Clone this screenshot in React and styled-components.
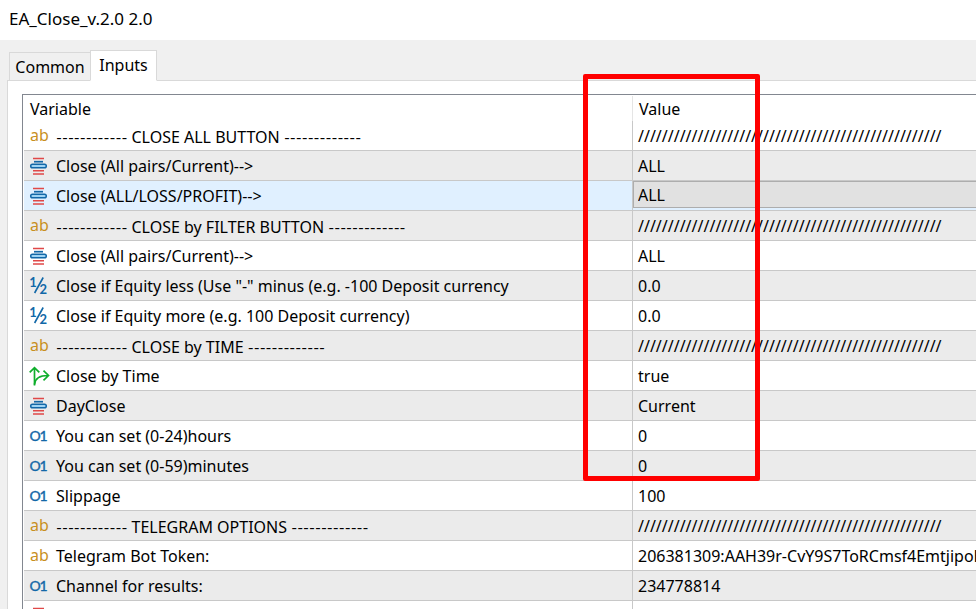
import { useState } from 'react';
import styled, { createGlobalStyle } from 'styled-components';

const GlobalStyle = createGlobalStyle`
    * {
        box-sizing: border-box;
    }

    body {
        margin: 0;
        overflow: hidden;
        background: #f0f0f0;
        color: #000;
        font-family: "Noto Sans", "Open Sans", sans-serif;
        font-size: 16px;
    }
`

const Window = styled.div`
    position: relative;
    display: flex;
    flex-direction: column;
    height: 100vh;
    overflow: hidden;
`

const TitleBar = styled.header`
    flex: none;
    height: 40px;
    padding: 0 9px;
    background: #fff;
`

const Title = styled.h1`
    margin: 0;
    font-size: 17px;
    font-weight: 400;
    line-height: 38px;
`

const TabBar = styled.div`
    display: flex;
    flex: none;
    align-items: flex-end;
    height: 41px;
    margin-bottom: -1px;
    padding-left: 9px;
    z-index: 1;
`

const Tab = styled.button`
    width: ${({ $active }) => $active ? 67 : 82}px;
    height: ${({ $active }) => $active ? 31 : 29}px;
    margin-right: -1px;
    padding: 0 0 ${({ $active }) => $active ? 2 : 0}px;
    border: 1px solid #d9d9d9;
    border-bottom-color: ${({ $active }) => $active ? '#fff' : '#d9d9d9'};
    background: ${({ $active }) => $active ? '#fff' : '#f0f0f0'};
    color: inherit;
    font: inherit;
    line-height: 26px;
`

const Panel = styled.main`
    flex: 1;
    min-height: 0;
    margin-left: 7px;
    padding: 13px 0 0 14px;
    border: solid #d9d9d9;
    border-width: 1px 0 0 1px;
    background: #fff;
`

const List = styled.div`
    height: 100%;
    padding: 1px 0 0 1px;
    border: solid #828790;
    border-width: 1px 0 0 1px;
    overflow: hidden;
`

const Table = styled.table`
    width: 100%;
    table-layout: fixed;
    border-collapse: separate;
    border-spacing: 0;
`

const NameCol = styled.col`
    width: 609px;
`

const HeadCell = styled.th`
    height: 25px;
    padding: 0 6px;
    border-right: 1px solid ${({ $last }) => $last ? 'transparent' : '#e5e5e5'};
    font-weight: 400;
    line-height: 24px;
    text-align: left;
`

const Row = styled.tr`
    background: ${({ $selected }) => $selected ? '#e0f0ff' : '#fff'};

    &:nth-child(even) {
        background: #ebebeb;
    }
`

const Cell = styled.td`
    height: 30px;
    padding: 2px 0 0 5px;
    border-bottom: 1px solid #c8c8c8;
    line-height: 27px;
    white-space: nowrap;
    overflow: hidden;
`

const NameCell = styled(Cell)`
    padding-left: 6px;
    border-right: 1px solid #c8c8c8;
`

const EditCell = styled(Cell)`
    padding: 0;
    vertical-align: top;
`

const Name = styled.div`
    display: flex;
    align-items: center;
    height: 27px;
    gap: 6px;
`

const Dashes = styled.span`
    font-family: Lato, sans-serif;
`

const Select = styled.select`
    display: block;
    width: 100%;
    height: 27px;
    padding: 0 4px 2px;
    border: 1px solid #adadad;
    border-right: 0;
    border-radius: 0;
    background: #e1e1e1;
    appearance: none;
    color: inherit;
    font: inherit;
`

const Glyph = styled.svg`
    flex: none;
    width: 20px;
    height: 20px;
    overflow: visible;
`

const Highlight = styled.div`
    position: absolute;
    top: 74px;
    left: 583px;
    width: 177px;
    height: 407px;
    border: 5px solid #f00;
    border-radius: 2px;
    pointer-events: none;
    z-index: 2;
`

const StringIcon = () => (
    <Glyph viewBox="0 0 20 20" aria-hidden="true">
        <text x="0" y="14" fill="#c8901e" fontSize="16">ab</text>
    </Glyph>
)

const IntegerIcon = () => (
    <Glyph viewBox="0 0 20 20" fill="#1268a8" fontFamily="Lato" fontSize="14" stroke="#1268a8" strokeWidth=".4" aria-hidden="true">
        <text x="-.5" y="14">O</text>
        <text x="9.5" y="14">1</text>
    </Glyph>
)

const DoubleIcon = () => (
    <Glyph viewBox="0 0 20 20" fill="#1268a8" fontFamily="Lato" fontSize="13" fontWeight="700" aria-hidden="true">
        <text x="-.8" y="9.5">1</text>
        <path d="M13.2.5 4.6 16" stroke="#1268a8" strokeWidth="1.6" />
        <text x="9.6" y="16.5">2</text>
    </Glyph>
)

const BoolIcon = () => (
    <Glyph viewBox="0 0 20 20" fill="none" stroke="#0fae2c" strokeWidth="1.7" aria-hidden="true">
        <path d="M4.5 18.5V.8M-.3 5.4 4.5.6 9.3 5.4" />
        <path d="M4.5 17.5C5 11.5 9 8.5 18 8.5M13.5 3.7l5 4.8-5 4.8" />
    </Glyph>
)

const EnumIcon = () => (
    <Glyph viewBox="0 0 20 20" aria-hidden="true">
        <path d="M3 1.5h11M3 13.7h11M3 17h11" stroke="#e04848" strokeWidth="1.6" />
        <path d="M4 4.7h9" stroke="#1268a8" strokeWidth="1.7" />
        <rect x=".7" y="7.2" width="15.6" height="3.6" rx="1.8" fill="#9fd4f4" stroke="#1268a8" strokeWidth="1.5" />
    </Glyph>
)

const icons = {
    string: StringIcon,
    int: IntegerIcon,
    double: DoubleIcon,
    bool: BoolIcon,
    enum: EnumIcon
}

const slashes = '/'.repeat(51)

const inputs = [
    { type: 'string', section: 'CLOSE ALL BUTTON', value: slashes },
    { type: 'enum', name: 'Close (All pairs/Current)-->', value: 'ALL' },
    { type: 'enum', name: 'Close (ALL/LOSS/PROFIT)-->', value: 'ALL', options: ['ALL', 'LOSS', 'PROFIT'] },
    { type: 'string', section: 'CLOSE by FILTER BUTTON', value: slashes },
    { type: 'enum', name: 'Close (All pairs/Current)-->', value: 'ALL' },
    { type: 'double', name: 'Close if Equity less (Use "-" minus (e.g. -100 Deposit currency', value: '0.0' },
    { type: 'double', name: 'Close if Equity more (e.g. 100 Deposit currency)', value: '0.0' },
    { type: 'string', section: 'CLOSE by TIME', value: slashes },
    { type: 'bool', name: 'Close by Time', value: 'true' },
    { type: 'enum', name: 'DayClose', value: 'Current' },
    { type: 'int', name: 'You can set (0-24)hours', value: '0' },
    { type: 'int', name: 'You can set (0-59)minutes', value: '0' },
    { type: 'int', name: 'Slippage', value: '100' },
    { type: 'string', section: 'TELEGRAM OPTIONS', value: slashes },
    { type: 'string', name: 'Telegram Bot Token:', value: '206381309:AAH39r-CvY9S7ToRCmsf4EmtjipoH' },
    { type: 'int', name: 'Channel for results:', value: '234778814' },
    { type: 'enum', name: '', value: '' }
]

const Section = ({ children }) => (
    <span>
        <Dashes>{ '-'.repeat(12) }</Dashes> { children } <Dashes>{ '-'.repeat(13) }</Dashes>
    </span>
)

const InputRow = ({ type, name, section, value, options }) => {
    const [selected, setSelected] = useState(value)
    const Icon = icons[type]

    return (
        <Row $selected={ !!options }>
            <NameCell>
                <Name>
                    <Icon />
                    { section && <Section>{ section }</Section> }
                    { options ? <label htmlFor="close-mode">{ name }</label> : <span>{ name }</span> }
                </Name>
            </NameCell>
            { options ? (
                <EditCell>
                    <Select id="close-mode" value={ selected } onChange={ e => setSelected(e.target.value) }>
                        { options.map(option => <option key={ option }>{ option }</option>) }
                    </Select>
                </EditCell>
            ) : <Cell>{ value }</Cell> }
        </Row>
    )
}

const App = () => (
    <Window>
        <GlobalStyle />
        <TitleBar>
            <Title>EA_Close_v.2.0 2.0</Title>
        </TitleBar>
        <TabBar role="tablist">
            <Tab role="tab" aria-selected="false">Common</Tab>
            <Tab role="tab" aria-selected="true" $active>Inputs</Tab>
        </TabBar>
        <Panel role="tabpanel">
            <List>
                <Table>
                    <colgroup>
                        <NameCol />
                        <col />
                    </colgroup>
                    <thead>
                        <tr>
                            <HeadCell>Variable</HeadCell>
                            <HeadCell $last>Value</HeadCell>
                        </tr>
                    </thead>
                    <tbody>
                        { inputs.map((input, i) => <InputRow key={ i } { ...input } />) }
                    </tbody>
                </Table>
            </List>
        </Panel>
        <Highlight />
    </Window>
)

export default App
